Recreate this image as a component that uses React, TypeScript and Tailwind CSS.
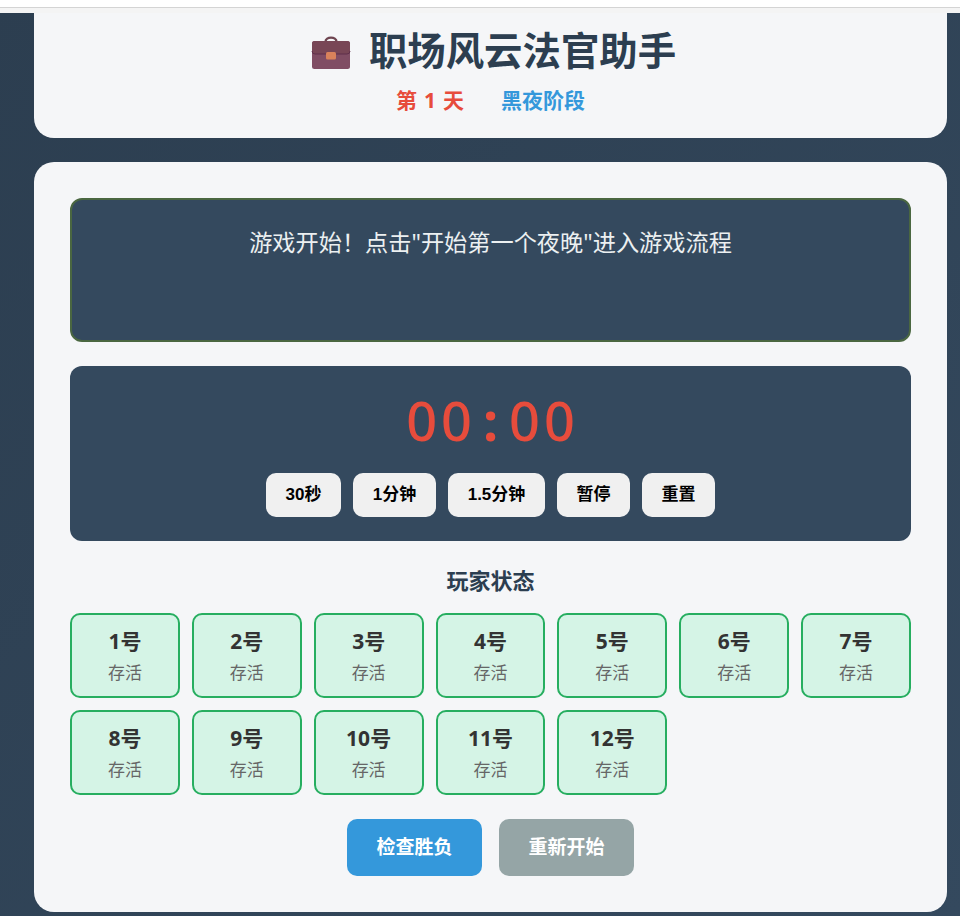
const CJK = "font-['Noto_Sans','Noto_Sans_CJK_SC',sans-serif]"
const BTN_FONT = "font-['Liberation_Sans','Noto_Sans_CJK_SC',sans-serif]"

const PLAYERS = Array.from({ length: 12 }, (_, i) => i + 1)
const TIMER_BUTTONS = [
  { label: "30秒", width: "w-[75px]" },
  { label: "1分钟", width: "w-[83px]" },
  { label: "1.5分钟", width: "w-[97px]" },
  { label: "暂停", width: "w-[73px]" },
  { label: "重置", width: "w-[73px]" },
]

function BriefcaseIcon() {
  return (
    <svg width="40" height="34" viewBox="0 0 40 34" aria-hidden className="mt-[3px] shrink-0">
      <path d="M14.5 6 C14.5 0.2 25.5 0.2 25.5 6" fill="none" stroke="#6e4450" strokeWidth="2.4" />
      <rect x="1" y="5" width="38" height="28" rx="2.5" fill="#804d64" />
      <path d="M1 7.5 a2.5 2.5 0 0 1 2.5-2.5 h33 a2.5 2.5 0 0 1 2.5 2.5 V15 a3 3 0 0 1-3 3 H4 a3 3 0 0 1-3-3 Z" fill="#784656" />
      <path d="M1 15 a3 3 0 0 0 3 3 H36 a3 3 0 0 0 3-3" fill="none" stroke="#5f2f4b" strokeWidth="1" />
      <rect x="15" y="16" width="10" height="7.5" rx="1.5" fill="#d9825b" />
    </svg>
  )
}

function PlayerCard({ id }: { id: number }) {
  return (
    <div className="flex h-[85px] flex-col items-center rounded-[10px] border-2 border-[#27ae60] bg-[#d5f4e6] pt-[11px]">
      <div className="text-[21px] font-bold leading-[30px] text-[#333]">{id}号</div>
      <div className="mt-[5px] text-[17px] leading-6 text-[#666]">存活</div>
    </div>
  )
}

export default function App() {
  return (
    <div className={`${CJK} h-[916px] w-[960px] overflow-hidden bg-[linear-gradient(135deg,#2c3e50,#34495e)]`}>
      <div className="h-[7px] bg-white" />
      <div className="h-px bg-[#d4d4d4]" />
      <div className="h-[5px] bg-[#f4f4f4]" />

      <div className="mx-[34px] w-[913px]">
        <header className="flex h-[125px] flex-col items-center rounded-b-[20px] bg-[#f5f6f8] pt-[8px]">
          <div className="ml-[6px] flex h-[60px] items-center gap-[18px]">
            <BriefcaseIcon />
            <h1 className="pb-[3px] text-[38.4px] font-bold leading-[60px] text-[#2c3e50]">职场风云法官助手</h1>
          </div>
          <div className="mt-[5px] flex gap-[37px] text-[21px] font-bold leading-7">
            <span className="text-[#e74c3c] [word-spacing:1.5px]">第 1 天</span>
            <span className="text-[#3498db]">黑夜阶段</span>
          </div>
        </header>

        <main className="mt-6 flex h-[750px] flex-col rounded-[20px] bg-[#f5f6f8] px-9 pt-9">
          <section className="h-[144px] rounded-xl border-2 border-[#4a6741] bg-[#34495e] pt-[22px] text-center text-[23.2px] leading-[40px] text-[#ecf0f1]">
            {"游戏开始\uFF01点击\"开始第一个夜晚\"进入游戏流程"}
          </section>

          <section className="mt-6 flex h-[175px] flex-col items-center rounded-xl bg-[#34495e] pt-[18px]">
            <div className="ml-[4px] h-[72px] text-[54px] font-medium leading-[72px] tracking-[4px] text-[#e74c3c]">
              00<span className="mx-[7px] font-bold">:</span>00
            </div>
            <div className="mt-[17px] flex gap-3">
              {TIMER_BUTTONS.map((button) => (
                <button
                  key={button.label}
                  type="button"
                  className={`${BTN_FONT} ${button.width} h-11 rounded-[10px] bg-[#f0f0f0] text-[17px] font-bold text-black`}
                >
                  {button.label}
                </button>
              ))}
            </div>
          </section>

          <h3 className="mt-[24px] text-center text-[22px] font-bold leading-[30px] text-[#2c3e50]">玩家状态</h3>

          <div className="mt-[18px] grid grid-cols-7 gap-3">
            {PLAYERS.map((id) => (
              <PlayerCard key={id} id={id} />
            ))}
          </div>

          <div className="mt-6 flex justify-center gap-[17px]">
            <button type="button" className="h-[57px] w-[135px] rounded-[10px] bg-[#3498db] text-[19px] font-bold text-white">
              检查胜负
            </button>
            <button type="button" className="h-[57px] w-[135px] rounded-[10px] bg-[#95a5a6] text-[19px] font-bold text-white">
              重新开始
            </button>
          </div>
        </main>
      </div>
    </div>
  )
}
